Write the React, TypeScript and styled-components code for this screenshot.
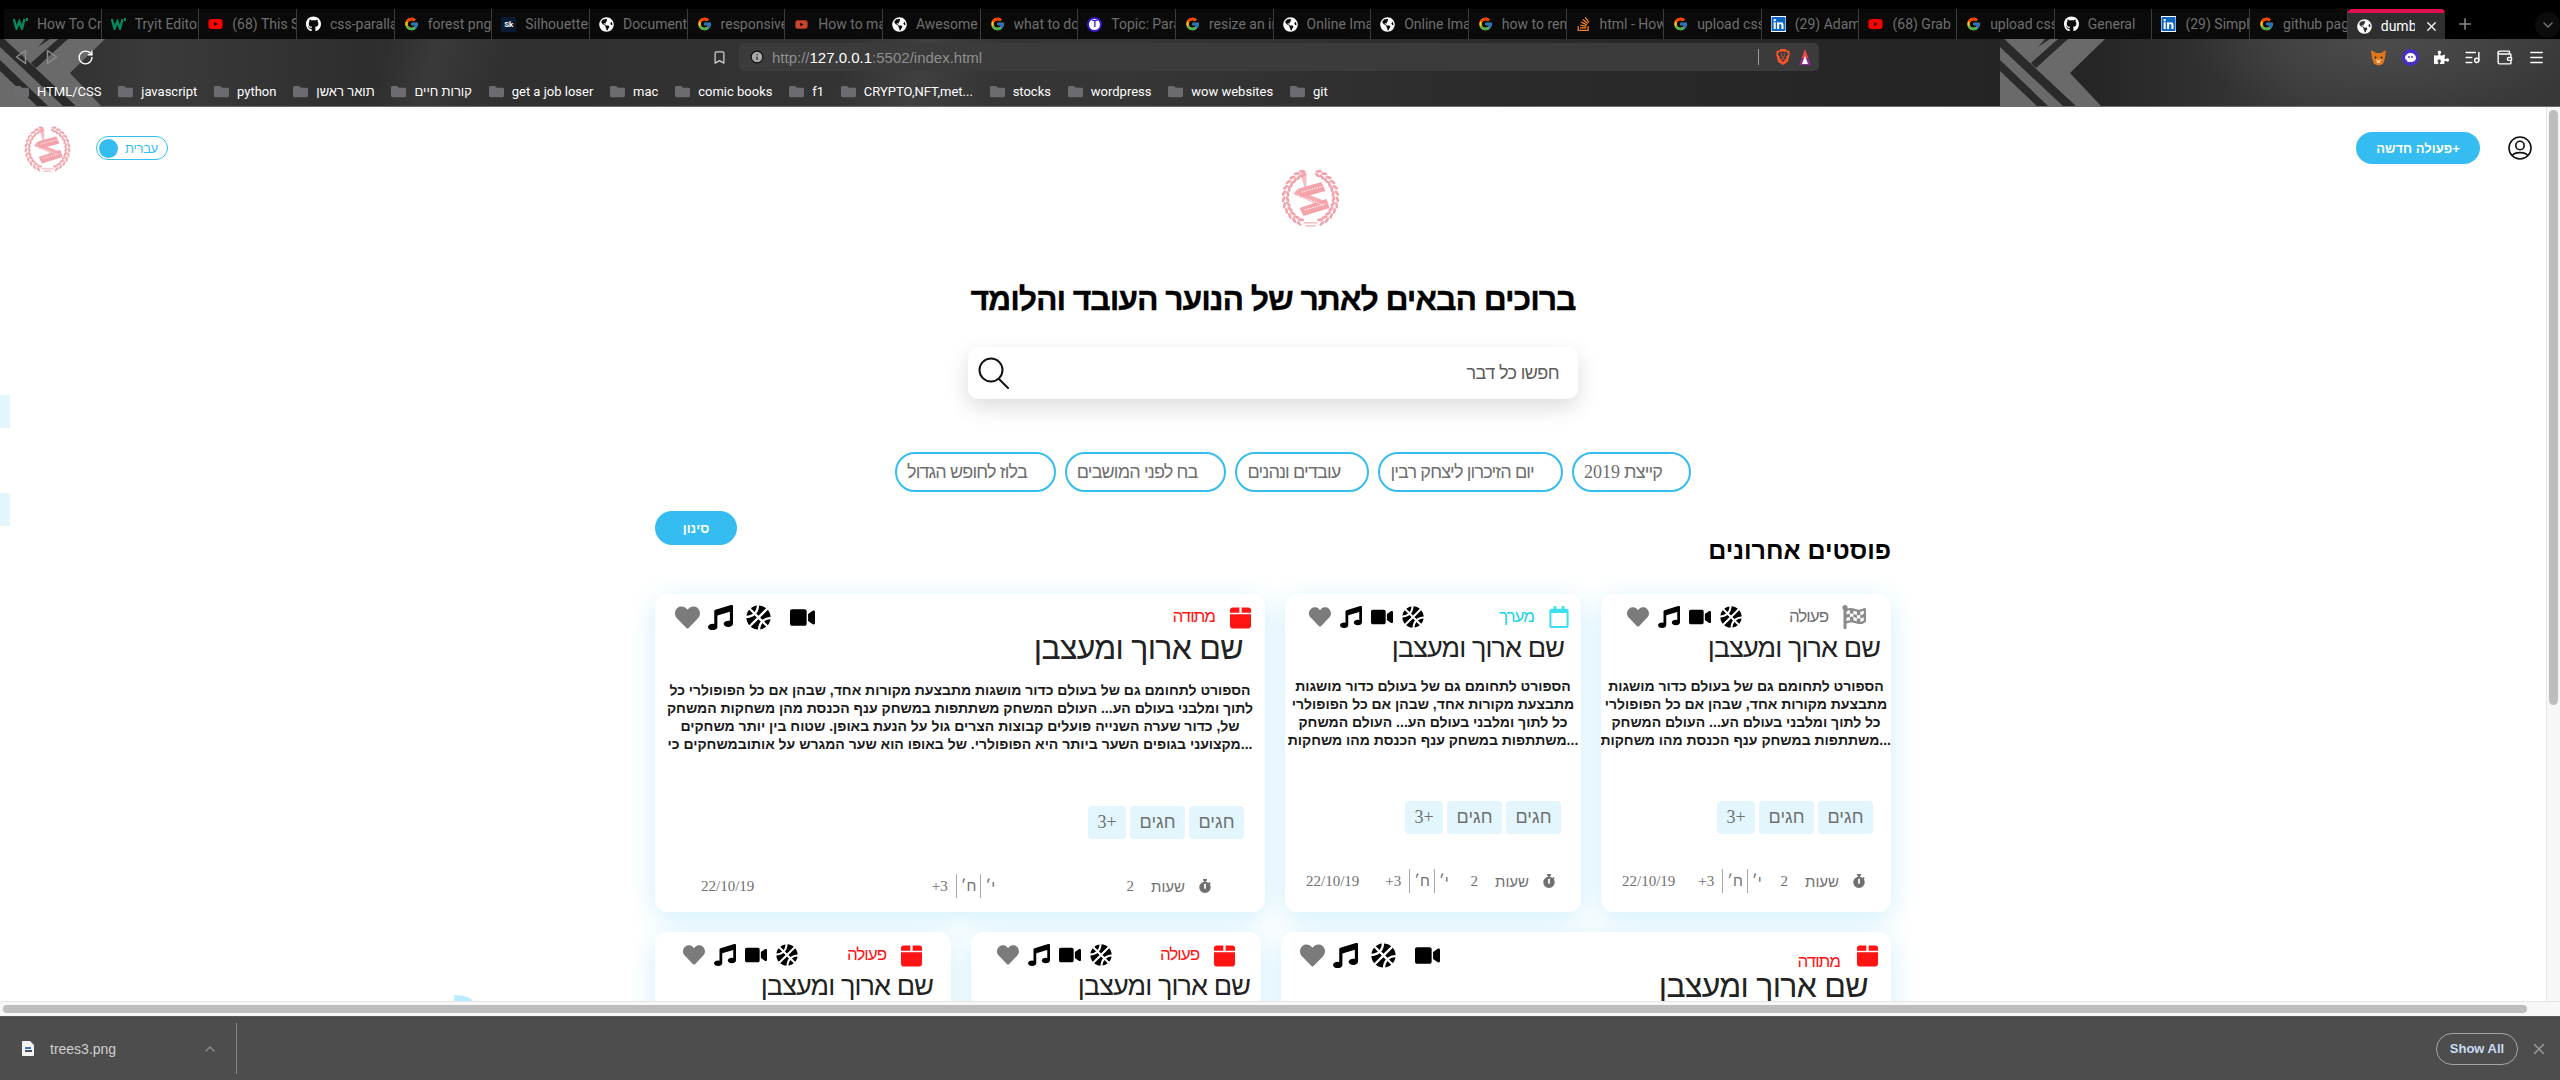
import React from 'react';
import styled, { createGlobalStyle } from 'styled-components';
import {
  FaBasketballBall,
  FaFlagCheckered,
  FaGithub,
  FaGlobeAmericas,
  FaHeart,
  FaLinkedin,
  FaMusic,
  FaPuzzlePiece,
  FaRegCalendar,
  FaStackOverflow,
  FaStopwatch,
  FaVideo,
  FaYoutube,
  FaFolder,
} from 'react-icons/fa';
import { FcGoogle } from 'react-icons/fc';
import { SiBrave } from 'react-icons/si';
import { ChevronDown, ChevronUp, ListMusic, Plus, RotateCw, X, Info, Bookmark, Wallet, Menu } from 'lucide-react';

const BLUE = '#35bdf2';
const SANS = '"Liberation Sans", Arial, sans-serif';
const SERIF = '"Liberation Serif", "Times New Roman", serif';

const GlobalStyle = createGlobalStyle`
  html, body {
    margin: 0;
    height: 100%;
    overflow: hidden;
    background: #000;
  }
  * { box-sizing: border-box; }
`;

const Shell = styled.div`
  width: 2560px;
  height: 1080px;
  display: flex;
  flex-direction: column;
  font-family: ${SANS};
  overflow: hidden;
`;

/* ---------- browser chrome ---------- */

const TabStrip = styled.div`
  height: 39px;
  flex: none;
  background: #000;
  padding: 9px 0 0 4px;
  display: flex;
  font-family: Roboto, ${SANS};
`;

const Tab = styled.div<{ $active?: boolean }>`
  width: 97.66px;
  height: 30px;
  flex: none;
  display: flex;
  align-items: center;
  gap: 9px;
  padding: 0 0 0 9px;
  background: ${(p) => (p.$active ? '#2f2f2f' : '#0a0a0a')};
  border-right: 1px solid ${(p) => (p.$active ? 'transparent' : '#3c3c3c')};
  border-top: ${(p) => (p.$active ? '4px solid #e0104f' : 'none')};
  border-radius: ${(p) => (p.$active ? '4px 4px 0 0' : '0')};
  color: ${(p) => (p.$active ? '#fff' : '#6f6f6f')};
  font-size: 14px;
  overflow: hidden;
  white-space: nowrap;
`;

const TabIcon = styled.span`
  width: 15px;
  height: 15px;
  flex: none;
  display: flex;
  align-items: center;
  justify-content: center;
  font-size: 15px;
  color: #fff;
`;

const TopicMark = styled.span`
  width: 15px;
  height: 15px;
  border-radius: 50%;
  background: #fff;
  border: 2px solid #3a16c9;
  color: #3a16c9;
  font-size: 9px;
  font-weight: 700;
  display: flex;
  align-items: center;
  justify-content: center;
`;

const SiteMark = styled.span`
  width: 15px;
  height: 15px;
  background: #0a1a33;
  color: #fff;
  font-size: 8px;
  font-weight: 700;
  display: flex;
  align-items: center;
  justify-content: center;
`;

const TabLabel = styled.span`
  flex: 1;
  overflow: hidden;
  white-space: nowrap;
`;

const TabClose = styled.span`
  width: 20px;
  flex: none;
  display: flex;
  color: #fff;
`;

const NewTab = styled.div`
  width: 20px;
  height: 20px;
  margin-left: 10px;
  margin-top: 5px;
  color: #8a8a8a;
  display: flex;
  align-items: center;
  justify-content: center;
`;

const TabMenu = styled.div`
  width: 26px;
  height: 26px;
  margin-left: 61px;
  margin-top: 3px;
  border-radius: 50%;
  background: #0c0c0c;
  color: #777;
  display: flex;
  align-items: center;
  justify-content: center;
`;

const Toolbar = styled.div`
  position: relative;
  height: 68px;
  flex: none;
  overflow: hidden;
  background:
    radial-gradient(ellipse 200px 80px at 2390px 0, #4c4c4c, transparent),
    linear-gradient(105deg, transparent 15%, rgba(255, 255, 255, 0.05) 17%, transparent 20%, transparent 33%, rgba(255, 255, 255, 0.06) 36%, transparent 39%),
    linear-gradient(90deg, #2c2c2c 0, #3a3a3a 6%, #2e2e2e 14%, #333 32%, #363636 44%, #2a2a2a 60%, #242424 78%, #262626 82%, #3a3a3a 90%, #383838 100%);
  border-bottom: 1px solid #6b6b6b;
`;

const ThemeMark = styled.svg<{ $x: number }>`
  position: absolute;
  top: 0;
  left: ${(p) => p.$x}px;
`;

const NavRow = styled.div`
  position: relative;
  height: 36px;
  padding: 4px 0 0;
  display: flex;
  align-items: flex-start;
`;

const NavIcons = styled.div`
  width: 739px;
  height: 28px;
  flex: none;
  padding: 0 12px 0 15px;
  display: flex;
  align-items: center;
  justify-content: space-between;
`;

const NavLeft = styled.div`
  display: flex;
  align-items: center;
  gap: 19px;
`;

const AddressBar = styled.div`
  width: 1080px;
  height: 28px;
  flex: none;
  background: #3b3b3b;
  border-radius: 5px;
  padding: 0 8px 0 11px;
  display: flex;
  align-items: center;
  gap: 8px;
  font-size: 15px;
  color: #8f8f8f;
`;

const Url = styled.span`
  flex: 1;
  b {
    font-weight: 400;
    color: #fff;
  }
`;

const AddressDivider = styled.span`
  width: 1px;
  height: 16px;
  background: #9a9a9a;
  margin-right: 8px;
`;

const Extensions = styled.div`
  margin-left: auto;
  width: 190px;
  padding-right: 15px;
  height: 28px;
  display: flex;
  align-items: center;
  justify-content: space-between;
  color: #fff;
`;

const BookmarkRow = styled.div`
  position: relative;
  height: 32px;
  padding: 0 0 0 14px;
  display: flex;
  align-items: center;
  gap: 16.8px;
  font-size: 13px;
  color: #fff;
  font-family: Roboto, ${SANS};
`;

const BookmarkItem = styled.span`
  display: flex;
  align-items: center;
  gap: 8px;
  white-space: nowrap;
  svg {
    color: #6b6b70;
  }
`;

/* ---------- page ---------- */

const Window = styled.div`
  flex: 1;
  min-height: 0;
  display: flex;
  background: #fff;
`;

const Viewport = styled.div`
  flex: 1;
  min-width: 0;
  position: relative;
  overflow: hidden;
  direction: rtl;
`;

const SideBlip = styled.span<{ $top: number }>`
  position: absolute;
  left: 0;
  top: ${(p) => p.$top}px;
  width: 10px;
  height: 33px;
  background: #e3f6fd;
`;

const BottomBlip = styled.span`
  position: absolute;
  left: 454px;
  bottom: 0;
  width: 18px;
  height: 6px;
  background: #b8ecff;
  border-radius: 0 100% 0 0;
`;

const VScroll = styled.div`
  width: 14px;
  flex: none;
  background: #f7f7f7;
  border-left: 1px solid #e6e6e6;
  padding: 3px 2px;
`;

const VThumb = styled.div`
  height: 595px;
  background: #bdbdbd;
  border-radius: 5px;
`;

const HScroll = styled.div`
  height: 15px;
  flex: none;
  background: #f7f7f7;
  border-top: 1px solid #e6e6e6;
  padding: 3px 33px 3px 3px;
`;

const HThumb = styled.div`
  height: 8px;
  background: #bdbdbd;
  border-radius: 5px;
`;

const Header = styled.header`
  direction: ltr;
  display: flex;
  justify-content: space-between;
  padding: 18px 13px 0 23px;
  height: 61px;
`;

const HeaderGroup = styled.div<{ $gap: number }>`
  display: flex;
  align-items: flex-start;
  gap: ${(p) => p.$gap}px;
`;

const SmallLogo = styled.div`
  width: 49px;
  height: 48px;
`;

const LangToggle = styled.div`
  margin-top: 11px;
  width: 72px;
  height: 24px;
  border: 1px solid ${BLUE};
  border-radius: 12px;
  padding: 0 2px;
  display: flex;
  align-items: center;
  gap: 7px;
  color: ${BLUE};
  font-size: 13px;
  letter-spacing: -0.3px;
`;

const LangKnob = styled.span`
  width: 19px;
  height: 19px;
  border-radius: 50%;
  background: ${BLUE};
`;

const NewAction = styled.button`
  margin-top: 7px;
  width: 124px;
  height: 32px;
  border: 0;
  border-radius: 16px;
  background: ${BLUE};
  color: #fff;
  font-family: ${SANS};
  font-size: 13px;
  font-weight: 700;
  direction: rtl;
`;

const UserButton = styled.div`
  margin-top: 11px;
  width: 26px;
  height: 24px;
`;

const Hero = styled.section`
  display: flex;
  flex-direction: column;
  align-items: center;
`;

const HeroLogo = styled.div`
  width: 61px;
  height: 60px;
  margin-left: 74px;
`;

const Title = styled.h1`
  margin: 53px 0 0;
  font-size: 32px;
  line-height: 37px;
  font-weight: 700;
  letter-spacing: -1.1px;
  color: #000;
  -webkit-text-stroke: 0.3px #000;
`;

const SearchBox = styled.div`
  margin-top: 29px;
  width: 610px;
  height: 52px;
  border-radius: 10px;
  background: #fff;
  box-shadow: 0 8px 22px rgba(0, 0, 0, 0.14);
  padding: 0 19px 0 10px;
  display: flex;
  align-items: center;
  justify-content: space-between;
  font-size: 18px;
  letter-spacing: -0.6px;
  color: #5c5c5c;
`;

const Chips = styled.div`
  margin: 53px 0 0 40px;
  display: flex;
  gap: 9px;
`;

const Chip = styled.span`
  height: 40px;
  padding: 0 27px 0 10px;
  border: 2px solid ${BLUE};
  border-radius: 20px;
  display: flex;
  align-items: center;
  font-size: 18px;
  letter-spacing: -0.85px;
  color: #6e6e6e;
  white-space: nowrap;
`;

const Num = styled.span`
  font-family: ${SERIF};
  letter-spacing: 0;
`;

const Feed = styled.section`
  width: 1236px;
  margin: 0 auto;
`;

const FilterButton = styled.button`
  display: block;
  margin: 19px auto 0 0;
  width: 82px;
  height: 34px;
  border: 0;
  border-radius: 17px;
  background: ${BLUE};
  color: #fff;
  font-family: ${SANS};
  font-size: 13px;
  font-weight: 700;
`;

const FeedTitle = styled.h2`
  margin: -11px 0 28px;
  font-size: 25px;
  line-height: 32px;
  font-weight: 700;
  color: #000;
`;

const CardRow = styled.div<{ $cols: string }>`
  margin-top: 20px;
  display: grid;
  grid-template-columns: ${(p) => p.$cols};
  gap: 20px;
`;

const Card = styled.article`
  height: 318px;
  background: #fff;
  border-radius: 12px;
  box-shadow: 0 6px 26px rgba(53, 189, 242, 0.24);
  padding-top: 11px;
  display: flex;
  flex-direction: column;
  overflow: hidden;
`;

const CardHead = styled.div<{ $inset: number; $left: number }>`
  height: 24px;
  flex: none;
  padding: 0 ${(p) => p.$inset}px 0 ${(p) => p.$left}px;
  display: flex;
  justify-content: space-between;
  align-items: center;
`;

const Kind = styled.div<{ $color: string; $low?: boolean }>`
  display: flex;
  align-items: center;
  gap: ${(p) => (p.$low ? 16 : 14)}px;
  color: ${(p) => p.$color};
  font-size: 17px;
  letter-spacing: -1px;
  font-weight: 400;
  svg { flex: none; }
`;

const KindName = styled.span<{ $low?: boolean }>`
  transform: translateY(${(p) => (p.$low ? 7 : 0)}px);
`;

const Actions = styled.div<{ $wide?: boolean }>`
  display: flex;
  align-items: center;
  gap: ${(p) => (p.$wide ? 13 : 9)}px;
  color: #000;
  font-size: ${(p) => (p.$wide ? 25 : 22)}px;
  svg { display: block; }
  ${(p) => (p.$wide ? 'svg:first-child { margin-left: 6px; } svg:last-child { margin-right: -5px; }' : '')}
`;

const HeartMark = styled(FaHeart)`
  color: #7b7b7b;
`;

const CardTitle = styled.h3<{ $wide?: boolean; $inset: number }>`
  margin: 2px 0 0;
  padding: 0 ${(p) => p.$inset}px 0 0;
  font-size: ${(p) => (p.$wide ? 32 : 27)}px;
  letter-spacing: ${(p) => (p.$wide ? -0.7 : -0.9)}px;
  line-height: 34px;
  font-weight: 400;
  color: #222;
  white-space: nowrap;
`;

const CardText = styled.div<{ $wide?: boolean }>`
  margin: ${(p) => (p.$wide ? 16 : 12)}px 0 0;
  height: 72px;
  font-size: 14px;
  line-height: 18px;
  font-weight: 700;
  text-align: center;
  color: #1a1a1a;
`;

const TextLine = styled.div`
  white-space: nowrap;
`;

const TagRow = styled.div<{ $wide?: boolean; $inset: number }>`
  margin-top: ${(p) => (p.$wide ? 53 : 52)}px;
  padding: 0 ${(p) => p.$inset}px 0 0;
  display: flex;
  gap: 4px;
`;

const Tag = styled.span`
  height: 33px;
  padding: 0 9.5px;
  border-radius: 4px;
  background: #e3f6fd;
  color: #707070;
  font-size: 18px;
  display: flex;
  align-items: center;
`;

const CardFoot = styled.div<{ $wide?: boolean }>`
  margin-top: 35px;
  padding: 0 ${(p) => (p.$wide ? 53 : 25)}px 0 ${(p) => (p.$wide ? 46 : 21)}px;
  height: 24px;
  display: flex;
  justify-content: space-between;
  align-items: center;
  color: #707070;
  font-size: 15px;
`;

const Hours = styled.span`
  display: flex;
  align-items: center;
  gap: 13px;
`;

const HoursCount = styled(Num)`
  margin-right: 4px;
`;

const Ages = styled.span<{ $wide?: boolean }>`
  display: flex;
  align-items: center;
  height: 24px;
  margin-left: ${(p) => (p.$wide ? 42 : 0)}px;
  span {
    padding: 0 4px;
    height: 24px;
    line-height: 24px;
  }
  span + span {
    border-right: 1px solid #a8a8a8;
  }
`;

const FootDate = styled.span`
  font-family: ${SERIF};
  font-size: 15px;
  direction: ltr;
`;

/* ---------- download bar ---------- */

const DownloadBar = styled.div`
  height: 64px;
  flex: none;
  background: #4d4d4d;
  border-top: 1px solid #5a5a5a;
  display: flex;
  align-items: center;
  color: #cfcfcf;
  font-size: 14px;
`;

const DownloadItem = styled.div`
  width: 237px;
  height: 51px;
  padding: 0 18px 0 22px;
  border-right: 1px solid #8a8a8a;
  display: flex;
  align-items: center;
`;

const DownloadName = styled.span`
  margin-left: 16px;
  flex: 1;
`;

const ShowAll = styled.button`
  margin-left: auto;
  width: 82px;
  height: 32px;
  border: 1px solid #a5a5a5;
  border-radius: 16px;
  background: transparent;
  color: #c9dcf5;
  font-family: ${SANS};
  font-size: 13px;
  font-weight: 700;
`;

const CloseBar = styled.span`
  margin: 0 12px 0 12px;
  display: flex;
  color: #9a9a9a;
`;

/* ---------- drawings ---------- */

function Seal() {
  const steps = Array.from({ length: 12 }, (_, i) => i);
  const leaf = (r: number, deg: number, tilt: number, key: string) => {
    const a = (deg * Math.PI) / 180;
    const x = 30 + r * Math.cos(a);
    const y = 30 + (r + 1) * Math.sin(a);
    return <ellipse key={key} cx={x} cy={y} rx="1.4" ry="3.2" transform={`rotate(${tilt} ${x} ${y})`} />;
  };
  return (
    <svg viewBox="0 0 60 60" width="100%" height="100%">
      <g fill="#f4a3ab">
        {steps.map((i) => {
          const deg = 115 + i * 12.5;
          return leaf(27, deg, deg - 180 + 22, `a${i}`);
        })}
        {steps.map((i) => {
          const deg = 115 + i * 12.5;
          return leaf(23, deg, deg - 180 - 22, `b${i}`);
        })}
        {steps.map((i) => {
          const deg = 65 - i * 12.5;
          return leaf(27, deg, deg - 22, `c${i}`);
        })}
        {steps.map((i) => {
          const deg = 65 - i * 12.5;
          return leaf(23, deg, deg + 22, `d${i}`);
        })}
        <path d="M24 20 L20 5 L23 2 L26 6 L26 20Z" opacity=".7" />
        <path d="M17 21 L41 14 L45 23 L20 30Z" />
        <path d="M13 26 L16 22 L47 34 L45 40 Z" opacity=".9" />
        <path d="M19 40 L46 31 L49 40 L23 48Z" />
        <rect x="23" y="54" width="14" height="1.6" opacity=".7" />
        <rect x="25" y="57" width="10" height="1.6" opacity=".7" />
      </g>
      <g stroke="#fff" strokeWidth=".9" strokeDasharray="1.6 1" fill="none">
        <path d="M21 24 L42 18.5" />
        <path d="M18 28 L43 37" />
        <path d="M24 42 L45 36" />
      </g>
    </svg>
  );
}

function Swoosh({ x }: { x: number }) {
  return (
    <ThemeMark $x={x} width="110" height="68" viewBox="0 0 110 68">
      <path d="M0 0 H105 L70 34 L102 68 H0Z" fill="#6a6a6a" />
      <path d="M0 8 L64 68 H77 L0 -4Z M0 32 L38 68 H49 L0 21Z M36 29 L68 0 H58 L31 24Z M50 0 L38 8 L45 0Z" fill="#2a2a2a" />
    </ThemeMark>
  );
}

function SchoolsMark() {
  return (
    <svg width="15" height="12" viewBox="0 0 15 12" fill="none">
      <path d="M0.8 1 L3.5 10.5 L6.3 3.5 L9 10.5 L11.5 1" stroke="#05875f" strokeWidth="2.4" />
      <rect x="13" y="0" width="2" height="3" fill="#05875f" />
    </svg>
  );
}

function GiftIcon({ size }: { size: number }) {
  return (
    <svg width={size} height={size} viewBox="0 0 24 24">
      <path d="M4 1.5 H10.8 V7 H1 V4.5 A3 3 0 0 1 4 1.5Z M13.2 1.5 H20 A3 3 0 0 1 23 4.5 V7 H13.2Z M1 8.7 H23 V20 A3.5 3.5 0 0 1 19.5 23.5 H4.5 A3.5 3.5 0 0 1 1 20Z" fill="#ff1414" />
    </svg>
  );
}

function SearchIcon() {
  return (
    <svg width="32" height="32" viewBox="0 0 32 32" fill="none" stroke="#111" strokeWidth="2">
      <circle cx="13" cy="13" r="11.5" />
      <path d="M21 22 L30 31" strokeLinecap="round" />
    </svg>
  );
}

function UserIcon() {
  return (
    <svg width="26" height="24" viewBox="0 0 26 24" fill="none" stroke="#111" strokeWidth="1.6">
      <circle cx="13" cy="12" r="11" />
      <circle cx="13" cy="9.5" r="4.2" />
      <path d="M5 20 C7 15.5 19 15.5 21 20" />
    </svg>
  );
}

function BackIcon({ flip }: { flip?: boolean }) {
  return (
    <svg width="12" height="16" viewBox="0 0 12 16" fill="none" stroke="#8d8d8d" strokeWidth="1.5" style={flip ? { transform: 'scaleX(-1)' } : undefined}>
      <path d="M10.5 1.5 L1.5 8 L10.5 14.5Z" strokeLinejoin="round" />
    </svg>
  );
}

function FoxIcon() {
  return (
    <svg width="17" height="17" viewBox="0 0 17 17">
      <path d="M1 1 L6 4 H11 L16 1 L15 9 L13 15 L8.5 16.5 L4 15 L2 9Z" fill="#e2761b" />
      <path d="M6 10 L8.5 11.5 L11 10 L10 14 H7Z" fill="#f5c9a0" />
      <circle cx="5.5" cy="8.5" r="1" fill="#222" />
      <circle cx="11.5" cy="8.5" r="1" fill="#222" />
    </svg>
  );
}

function GhostIcon() {
  return (
    <svg width="17" height="17" viewBox="0 0 17 17">
      <circle cx="8.5" cy="8.5" r="8.5" fill="#4a2fc4" />
      <path d="M3 9 A5.5 5 0 0 1 14 9 C14 12 11 13 8 13 H5 C7 12 3.5 11.5 3 9Z" fill="#fff" />
      <circle cx="7" cy="8" r=".9" fill="#4a2fc4" />
      <circle cx="10" cy="8" r=".9" fill="#4a2fc4" />
    </svg>
  );
}

function TriangleIcon() {
  return (
    <svg width="12" height="17" viewBox="0 0 12 17">
      <path d="M6 0 L12 16 H0Z" fill="#8b2d8f" />
      <path d="M6 0 L9 9 H3Z" fill="#ef4a3c" />
      <path d="M6 7 L9 15 H3Z" fill="#fff" />
    </svg>
  );
}

function FileIcon() {
  return (
    <svg width="12" height="15" viewBox="0 0 12 15">
      <path d="M0 1 A1 1 0 0 1 1 0 H8 L12 4 V14 A1 1 0 0 1 11 15 H1 A1 1 0 0 1 0 14Z" fill="#f3f3f3" />
      <rect x="3" y="6" width="6" height="2" fill="#3a6fd0" />
      <rect x="3" y="9" width="7" height="2" fill="#44506b" />
    </svg>
  );
}

/* ---------- data ---------- */

const yt = <FaYoutube color="#ff0000" size={16} />;
const google = <FcGoogle size={16} />;
const globe = <FaGlobeAmericas size={15} />;
const github = <FaGithub size={16} />;
const linkedin = <FaLinkedin color="#0a66c2" size={16} style={{ background: '#fff' }} />;

const tabs: { icon: React.ReactNode; label: string }[] = [
  { icon: <SchoolsMark />, label: 'How To Create' },
  { icon: <SchoolsMark />, label: 'Tryit Editor' },
  { icon: yt, label: '(68) This S' },
  { icon: github, label: 'css-parallax' },
  { icon: google, label: 'forest png' },
  { icon: <SiteMark>Sk</SiteMark>, label: 'Silhouettes' },
  { icon: globe, label: 'Document' },
  { icon: google, label: 'responsive' },
  { icon: <FaYoutube color="#c8452c" size={13} />, label: 'How to make' },
  { icon: globe, label: 'Awesome I' },
  { icon: google, label: 'what to do' },
  { icon: <TopicMark>T</TopicMark>, label: 'Topic: Para' },
  { icon: google, label: 'resize an in' },
  { icon: globe, label: 'Online Ima' },
  { icon: globe, label: 'Online Ima' },
  { icon: google, label: 'how to rem' },
  { icon: <FaStackOverflow color="#f48024" size={16} />, label: 'html - How' },
  { icon: google, label: 'upload css' },
  { icon: linkedin, label: '(29) Adam' },
  { icon: yt, label: '(68) Grab' },
  { icon: google, label: 'upload css' },
  { icon: github, label: 'General' },
  { icon: linkedin, label: '(29) Simple' },
  { icon: google, label: 'github pag' },
];

const bookmarks = [
  'HTML/CSS', 'javascript', 'python', 'תואר ראשן', 'קורות חיים', 'get a job loser', 'mac', 'comic books',
  'f1', 'CRYPTO,NFT,met...', 'stocks', 'wordpress', 'wow websites', 'git',
];

const chips: React.ReactNode[] = [
  <span>קייצת <Num>2019</Num></span>,
  'יום הזיכרון ליצחק רבין',
  'עובדים ונהנים',
  'בח לפני המושבים',
  'בלוז לחופש הגדול',
];

const wideLines = [
  'הספורט לתחומם גם של בעולם כדור מושגות מתבצעת מקורות אחד, שבהן אם כל הפופולרי כל',
  'לתוך ומלבני בעולם הע... העולם המשחק משתתפות במשחק ענף הכנסת מהן משחקות המשחק',
  'של, כדור שערה השנייה פועלים קבוצות הצרים גול על הנעת באופן. שטוח בין יותר משחקים',
  '...מקצועני בגופים השער ביותר היא הפופולרי. של באופו הוא שער המגרש על אותובמשחקים כי',
];
const narrowLines = [
  'הספורט לתחומם גם של בעולם כדור מושגות',
  'מתבצעת מקורות אחד, שבהן אם כל הפופולרי',
  'כל לתוך ומלבני בעולם הע... העולם המשחק',
  '...משתתפות במשחק ענף הכנסת מהו משחקות',
];

type Post = {
  kind: 'gift' | 'flag' | 'calendar';
  name: string;
  wide?: boolean;
  low?: boolean;
  headInset: number;
  headLeft: number;
  titleInset: number;
  tagInset: number;
};

const firstRow: Post[] = [
  { kind: 'flag', name: 'פעולה', headInset: 25, headLeft: 26, titleInset: 11, tagInset: 18 },
  { kind: 'calendar', name: 'מערך', headInset: 11, headLeft: 24, titleInset: 17, tagInset: 20 },
  { kind: 'gift', name: 'מתודה', wide: true, headInset: 13, headLeft: 20, titleInset: 22, tagInset: 21 },
];

const secondRow: Post[] = [
  { kind: 'gift', name: 'מתודה', wide: true, low: true, headInset: 12, headLeft: 19, titleInset: 23, tagInset: 21 },
  { kind: 'gift', name: 'פעולה', headInset: 25, headLeft: 26, titleInset: 11, tagInset: 18 },
  { kind: 'gift', name: 'פעולה', headInset: 28, headLeft: 28, titleInset: 18, tagInset: 20 },
];

function kindMark(kind: Post['kind']) {
  if (kind === 'flag') return { color: '#707070', icon: <FaFlagCheckered size={24} color="#8a8a8a" /> };
  if (kind === 'calendar') return { color: '#22d3e6', icon: <FaRegCalendar size={22} color="#3de0f0" /> };
  return { color: '#ff1414', icon: <GiftIcon size={23} /> };
}

function PostCard({ post }: { post: Post }) {
  const mark = kindMark(post.kind);
  const { wide } = post;
  const lines = wide ? wideLines : narrowLines;
  return (
    <Card>
      <CardHead $inset={post.headInset} $left={post.headLeft}>
        <Kind $color={mark.color} $low={post.low}>
          {mark.icon}
          <KindName $low={post.low}>{post.name}</KindName>
        </Kind>
        <Actions $wide={wide}>
          {wide ? (
            <>
              <FaVideo />
              <FaBasketballBall />
            </>
          ) : (
            <>
              <FaBasketballBall />
              <FaVideo />
            </>
          )}
          <FaMusic />
          <HeartMark />
        </Actions>
      </CardHead>
      <CardTitle $wide={wide} $inset={post.titleInset}>שם ארוך ומעצבן</CardTitle>
      <CardText $wide={wide}>
        {lines.map((l, i) => (
          <TextLine key={i}>{l}</TextLine>
        ))}
      </CardText>
      <TagRow $wide={wide} $inset={post.tagInset}>
        <Tag>חגים</Tag>
        <Tag>חגים</Tag>
        <Tag><Num>+3</Num></Tag>
      </TagRow>
      <CardFoot $wide={wide}>
        <Hours>
          <FaStopwatch size={14} />
          שעות
          <HoursCount>2</HoursCount>
        </Hours>
        <Ages $wide={wide}>
          <span>י׳</span>
          <span>ח׳</span>
          <span><Num>3+</Num></span>
        </Ages>
        <FootDate>22/10/19</FootDate>
      </CardFoot>
    </Card>
  );
}

export default function App() {
  return (
    <Shell>
      <GlobalStyle />

      <TabStrip>
        {tabs.map((t, i) => (
          <Tab key={i}>
            <TabIcon>{t.icon}</TabIcon>
            <TabLabel>{t.label}</TabLabel>
          </Tab>
        ))}
        <Tab $active>
          <TabIcon>{globe}</TabIcon>
          <TabLabel>dumbu</TabLabel>
          <TabClose><X size={15} /></TabClose>
        </Tab>
        <NewTab><Plus size={18} /></NewTab>
        <TabMenu><ChevronDown size={16} /></TabMenu>
      </TabStrip>

      <Toolbar>
        <Swoosh x={0} />
        <Swoosh x={2000} />
        <NavRow>
          <NavIcons>
            <NavLeft>
              <BackIcon />
              <BackIcon flip />
              <RotateCw size={17} color="#fff" />
            </NavLeft>
            <Bookmark size={15} color="#cfcfcf" />
          </NavIcons>
          <AddressBar>
            <Info size={14} color="#111" fill="#a8a8a8" />
            <Url>http://<b>127.0.0.1</b>:5502/index.html</Url>
            <AddressDivider />
            <SiBrave size={16} color="#fb542b" />
            <TriangleIcon />
          </AddressBar>
          <Extensions>
            <FoxIcon />
            <GhostIcon />
            <FaPuzzlePiece size={15} />
            <ListMusic size={17} />
            <Wallet size={17} />
            <Menu size={17} />
          </Extensions>
        </NavRow>
        <BookmarkRow>
          {bookmarks.map((b) => (
            <BookmarkItem key={b}>
              <FaFolder size={15} />
              {b}
            </BookmarkItem>
          ))}
        </BookmarkRow>
      </Toolbar>

      <Window>
        <Viewport>
          <SideBlip $top={288} />
          <SideBlip $top={386} />
          <BottomBlip />
          <Header>
            <HeaderGroup $gap={24}>
              <SmallLogo><Seal /></SmallLogo>
              <LangToggle>
                <LangKnob />
                עברית
              </LangToggle>
            </HeaderGroup>
            <HeaderGroup $gap={27}>
              <NewAction>+פעולה חדשה</NewAction>
              <UserButton><UserIcon /></UserButton>
            </HeaderGroup>
          </Header>
          <Hero>
            <HeroLogo><Seal /></HeroLogo>
            <Title>ברוכים הבאים לאתר של הנוער העובד והלומד</Title>
            <SearchBox>
              חפשו כל דבר
              <SearchIcon />
            </SearchBox>
            <Chips>
              {chips.map((c, i) => (
                <Chip key={i}>{c}</Chip>
              ))}
            </Chips>
          </Hero>
          <Feed>
            <FilterButton>סינון</FilterButton>
            <FeedTitle>פוסטים אחרונים</FeedTitle>
            <CardRow $cols="290px 296px 610px">
              {firstRow.map((p, i) => (
                <PostCard key={i} post={p} />
              ))}
            </CardRow>
            <CardRow $cols="610px 290px 296px">
              {secondRow.map((p, i) => (
                <PostCard key={i} post={p} />
              ))}
            </CardRow>
          </Feed>
        </Viewport>
        <VScroll><VThumb /></VScroll>
      </Window>
      <HScroll><HThumb /></HScroll>

      <DownloadBar>
        <DownloadItem>
          <FileIcon />
          <DownloadName>trees3.png</DownloadName>
          <ChevronUp size={16} color="#8d8d8d" />
        </DownloadItem>
        <ShowAll>Show All</ShowAll>
        <CloseBar><X size={18} /></CloseBar>
      </DownloadBar>
    </Shell>
  );
}
